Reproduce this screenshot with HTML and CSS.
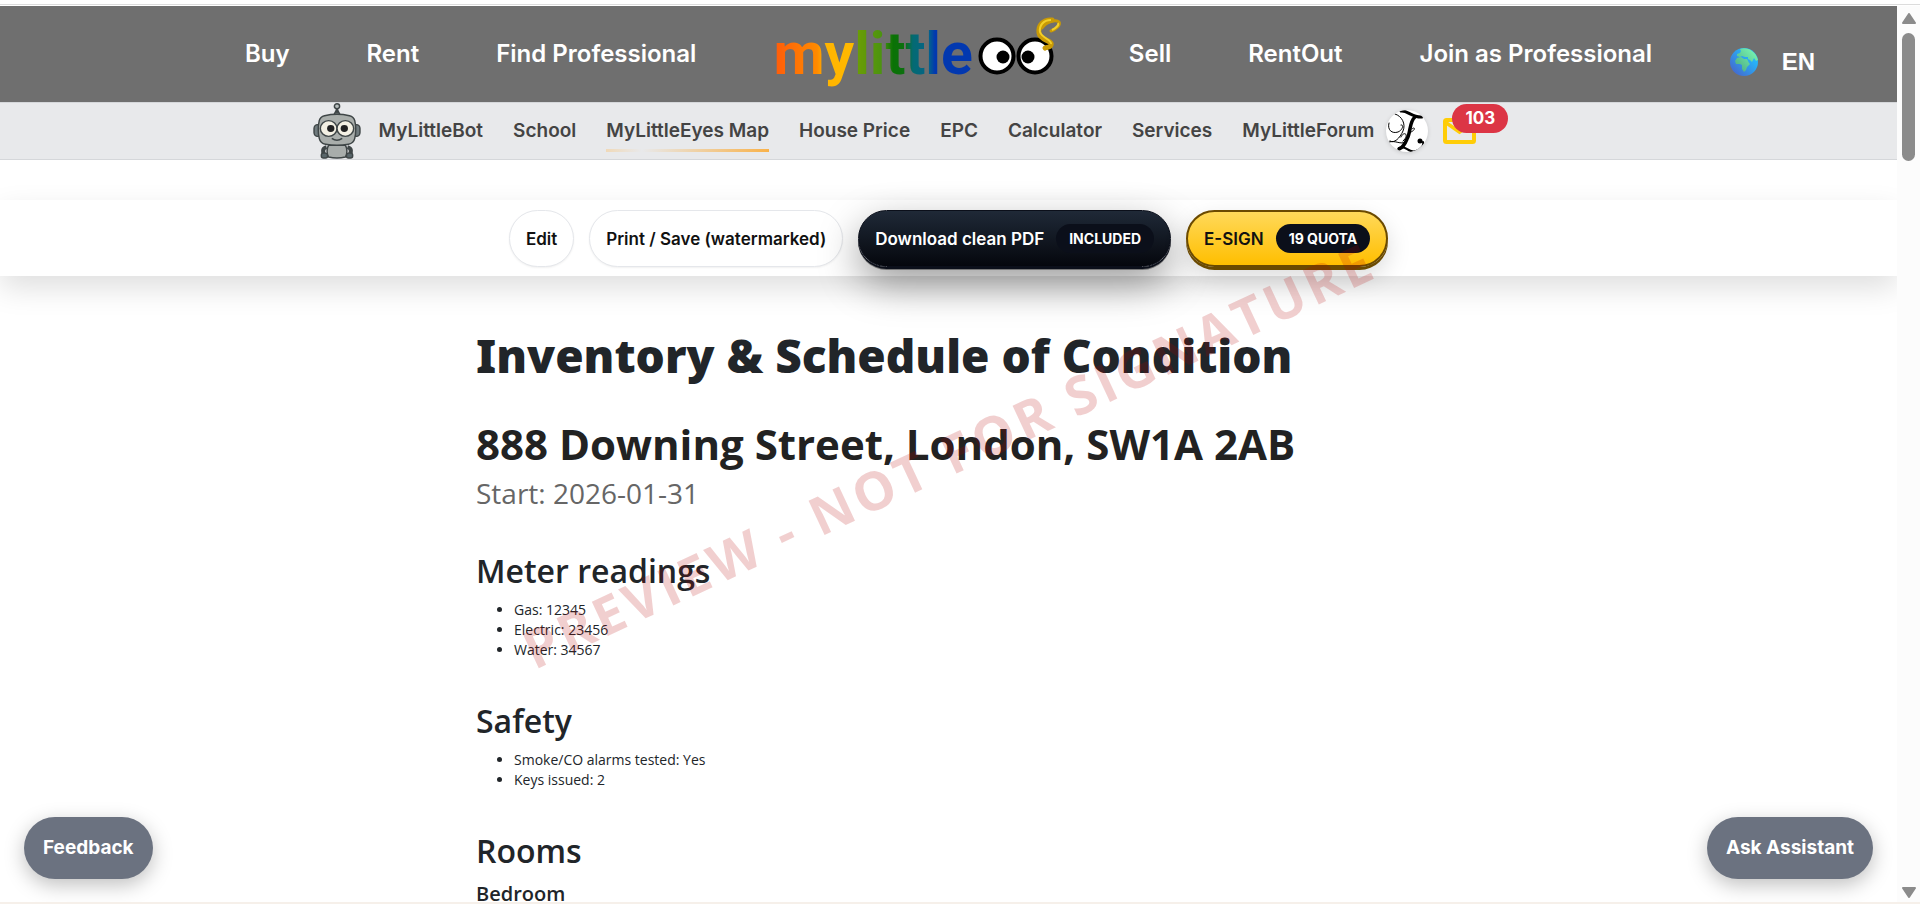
FILE: index.html
```html
<!DOCTYPE html>
<html lang="en">
<head>
<meta charset="utf-8">
<title>Inventory &amp; Schedule of Condition</title>
<link rel="stylesheet" href="styles.css">
</head>
<body>
<div class="frame">
  <div class="page">
    <header class="topbar">
      <nav class="main-nav">
        <a href="#">Buy</a>
        <a href="#">Rent</a>
        <a href="#">Find Professional</a>
        <a href="#" class="logo">
          <span class="logo-text">mylittle</span>
          <svg class="logo-eyes" width="76" height="60" viewBox="0 6 76 60">
            <g fill="#fff" stroke="#000" stroke-width="4">
              <circle cx="21" cy="38" r="16.5"/>
              <circle cx="59" cy="38" r="16.5"/>
            </g>
            <circle cx="27" cy="39" r="6.5"/>
            <circle cx="52" cy="39" r="6.5"/>
            <g fill="none" stroke="#c99a06" stroke-linecap="round">
              <path d="M76 2C68 1 62 7 63 15C64 23 77 22 75 27C74 30 70 29 69 30" stroke-width="5"/>
              <path d="M75 13C79 12 85 7 83 4C80 1 70 4 66 10" stroke-width="3"/>
            </g>
            <path d="M75 2C67 2 63 8 64 14C66 20 76 22 75 26M76 12C80 10 83 7 82 5" fill="none" stroke="#f3d028" stroke-width="2"/>
          </svg>
        </a>
        <a href="#">Sell</a>
        <a href="#">RentOut</a>
        <a href="#">Join as Professional</a>
      </nav>
      <button type="button" class="lang">
        <svg width="28" height="28" viewBox="0 0 28 28">
          <defs>
            <linearGradient id="sea" x1="1" y1="0" x2="0" y2="1"><stop offset=".3" stop-color="#27b2f8"/><stop offset="1" stop-color="#4a5bc6"/></linearGradient>
            <linearGradient id="land" x1="1" y1="0" x2="0" y2="1"><stop offset="0" stop-color="#7dffb8"/><stop offset="1" stop-color="#4aa57e"/></linearGradient>
          </defs>
          <circle cx="14" cy="14" r="14" fill="url(#sea)"/>
          <path fill="url(#land)" d="M10 1C13-.5 19 0 22 3C25 5 27 8 28 12L26 13L24 10L22 14L20 12L18 11L18 9L15 9L12 8L10 9L7 8L7 6L10 5L11 3ZM7 10L11 9L14 11L17 11L19 15L20 16L17 19L16 22L14 24L12 21L12 17L10 16L6 16L5 13Z"/>
        </svg>
        <span>EN</span>
      </button>
    </header>

    <nav class="sub-nav">
      <svg class="robot" width="48" height="56" viewBox="0 0 46 57" preserveAspectRatio="none">
        <g stroke="#3f4647" stroke-width="1.4">
          <path d="M20 12L22 8H24L26 12Z" fill="#6e7675"/>
          <path d="M23 4V10" stroke-width="2.5"/>
          <circle cx="23" cy="3.2" r="2.5" fill="#b8bfbe"/>
          <rect x="1" y="22" width="7" height="12" rx="4" fill="#707b7e"/>
          <rect x="38" y="22" width="7" height="12" rx="4" fill="#707b7e"/>
          <path d="M13 45C9 46 9 50 11 53M33 45C37 46 37 50 35 53" stroke-width="4" fill="none"/>
          <rect x="8" y="51" width="6" height="5" rx="2" fill="#59666a"/>
          <rect x="32" y="51" width="6" height="5" rx="2" fill="#59666a"/>
          <path d="M15 43H31C33 46 33 52 31 55Q23 57 15 55C13 52 13 46 15 43Z" fill="#a8adab"/>
          <path d="M11 13Q23 10 35 13Q39 14 40 18Q42 27 40 36Q39 41 34 42Q23 44 12 42Q7 41 6 36Q4 27 6 18Q7 14 11 13Z" fill="#a9aeab"/>
          <circle cx="15" cy="26" r="8" fill="#f4f1e4"/>
          <circle cx="31" cy="26" r="8" fill="#f4f1e4"/>
          <path d="M18 36Q23 40 28 36" fill="none"/>
        </g>
        <circle cx="17" cy="26" r="3.5" fill="#222"/>
        <circle cx="30" cy="26" r="3.5" fill="#222"/>
      </svg>
      <div class="links">
        <a href="#">MyLittleBot</a>
        <a href="#">School</a>
        <a href="#" class="active">MyLittleEyes Map</a>
        <a href="#">House Price</a>
        <a href="#">EPC</a>
        <a href="#">Calculator</a>
        <a href="#">Services</a>
        <a href="#">MyLittleForum</a>
      </div>
      <a href="#" class="avatar" aria-label="Profile">
        <svg width="42" height="42" viewBox="0 0 42 42">
          <g fill="none" stroke="#000" stroke-linecap="round">
            <path d="M15 1C21 0 27 8 36 7" stroke-width="3"/>
            <path d="M29 7C23 12 25 22 21 29C19 34 16 38 13 39" stroke-width="3.5"/>
            <path d="M13 38C20 34 22 44 30 41C35 39 38 36 37 32" stroke-width="2"/>
            <path d="M3 13C1 20 6 24 12 22C17 20 18 14 15 15M9 4C16 6 20 14 17 21C14 28 8 34 4 31M3 32C10 30 14 35 20 32M25 22C30 20 29 16 26 19M15 27C18 20 24 25 17 31" stroke-width="1"/>
          </g>
          <circle cx="34" cy="31" r="2.5"/>
        </svg>
      </a>
      <a href="#" class="mail" aria-label="Messages">
        <svg width="33" height="26" viewBox="0 0 33 26">
          <rect x="2" y="2" width="29" height="22" rx="1.5" fill="none" stroke="#ffcd07" stroke-width="4"/>
          <path d="M2 4L16.500 14L31 4" fill="none" stroke="#ffcd07" stroke-width="3.5"/>
        </svg>
        <span class="badge">103</span>
      </a>
    </nav>

    <div class="toolbar">
      <button type="button" class="btn">Edit</button>
      <button type="button" class="btn">Print / Save (watermarked)</button>
      <button type="button" class="btn btn-dark">Download clean PDF <span class="pill">INCLUDED</span></button>
      <button type="button" class="btn btn-gold">E-SIGN <span class="pill">19 QUOTA</span></button>
    </div>

    <main class="doc">
      <h1>Inventory &amp; Schedule of Condition</h1>
      <h2 class="address">888 Downing Street, London, SW1A 2AB</h2>
      <p class="start">Start: 2026-01-31</p>

      <h2>Meter readings</h2>
      <ul>
        <li>Gas: 12345</li>
        <li>Electric: 23456</li>
        <li>Water: 34567</li>
      </ul>

      <h2>Safety</h2>
      <ul>
        <li>Smoke/CO alarms tested: Yes</li>
        <li>Keys issued: 2</li>
      </ul>

      <h2>Rooms</h2>
      <h3>Bedroom</h3>
    </main>

    <div class="watermark"><span>PREVIEW - NOT FOR SIGNATURE</span></div>

    <button type="button" class="float feedback">Feedback</button>
    <button type="button" class="float assistant">Ask Assistant</button>
  </div>

  <div class="scrollbar">
    <svg width="14" height="11" viewBox="0 0 14 11"><path d="M7 1L13 10H1Z" fill="#8b8b8b" stroke="#8b8b8b" stroke-width="2" stroke-linejoin="round"/></svg>
    <div class="thumb"></div>
    <svg width="14" height="11" viewBox="0 0 14 11"><path d="M7 10L13 1H1Z" fill="#8b8b8b" stroke="#8b8b8b" stroke-width="2" stroke-linejoin="round"/></svg>
  </div>
</div>
</body>
</html>
```
FILE: styles.css
```css
* {
  box-sizing: border-box;
}

body {
  margin: 0;
  height: 100vh;
  display: flex;
  flex-direction: column;
  overflow: hidden;
  background: #fff;
  color: #212529;
  font-family: "Open Sans", "Noto Sans", sans-serif;
  border-bottom: 2px solid #f6f0ea;
}

body::before {
  content: "";
  flex: none;
  height: 6px;
  background: linear-gradient(#fff 4px, #dcdcdc 4px, #dcdcdc 5px, #fff 5px);
}

a {
  color: inherit;
  text-decoration: none;
}

button {
  font-family: inherit;
  cursor: pointer;
}

.frame {
  flex: 1;
  min-height: 0;
  display: flex;
}

.page {
  flex: 1;
  position: relative;
  overflow: hidden;
}

/* top bar */
.topbar {
  display: grid;
  grid-template-columns: 1fr auto 1fr;
  align-items: center;
  height: 96px;
  background: #6f6f6f;
  color: #fff;
  font: 600 24px/30px Inter, sans-serif;
}

.main-nav {
  grid-column: 2;
  display: flex;
  align-items: center;
  gap: 77px;
}

.logo {
  display: flex;
  align-items: center;
  gap: 3px;
  height: 76px;
}

.logo-text {
  font: 700 59px/76px Roboto, sans-serif;
  color: transparent;
  background: linear-gradient(90deg, #ff5a0a 0, #ff8a00 22%, #ffb400 26%, #ffb900 40%, #6b9d06 42%, #4a9310 55%, #0a7205 60%, #0c7010 66%, #046a72 70%, #04638a 78%, #0238b0 81%);
  -webkit-background-clip: text;
  background-clip: text;
}

.logo-eyes {
  overflow: visible;
}

.lang {
  display: flex;
  align-items: center;
  justify-self: end;
  gap: 24px;
  padding: 15px 0 0;
  margin-right: 82px;
  border: 0;
  background: none;
  color: #fff;
  font: 700 24px/30px "Liberation Sans", sans-serif;
}

/* second row of links */
.sub-nav {
  display: flex;
  align-items: center;
  justify-content: center;
  height: 58px;
  padding-right: 108px;
  background: #e8e9eb;
  border-top: 1px solid #d5d7da;
  border-bottom: 1px solid #d5d7da;
  color: #444;
  font: 600 19px/24px Inter, sans-serif;
}

.links {
  display: flex;
  gap: 30px;
  margin: 0 12px 0 18px;
}

.active {
  position: relative;
}

.active::after {
  content: "";
  position: absolute;
  left: 0;
  right: 0;
  bottom: -9px;
  height: 3px;
  background: linear-gradient(90deg, #f0d9b8, #e8e9eb 22%, #f9b24a);
}

.avatar {
  height: 42px;
  border-radius: 50%;
  background: #fff;
  overflow: hidden;
  box-shadow: 0 1px 4px rgba(0, 0, 0, .15);
}

.mail {
  position: relative;
  height: 26px;
  margin-left: 15px;
}

.badge {
  position: absolute;
  left: 9px;
  top: -14px;
  padding: 0 13px;
  border-radius: 15px;
  background: #dc3545;
  color: #fff;
  font-size: 17px;
  font-weight: 700;
  line-height: 29px;
}

/* document actions */
.toolbar {
  display: flex;
  justify-content: center;
  align-items: flex-start;
  gap: 15px;
  height: 76px;
  margin-top: 40px;
  padding-top: 10px;
  box-shadow: 0 12px 30px rgba(0, 0, 0, .13);
}

.btn {
  display: flex;
  align-items: center;
  gap: 12px;
  height: 57px;
  padding: 0 16px;
  border: 1px solid #e5e7eb;
  border-radius: 29px;
  background: #fff;
  color: #111;
  font: 600 17px/24px Inter, sans-serif;
  box-shadow: 0 1px 2px rgba(0, 0, 0, .06);
}

.pill {
  padding: 0 13px;
  border-radius: 15px;
  background: #0b0f1a;
  color: #fff;
  font-size: 14px;
  font-weight: 700;
  line-height: 29px;
}

.btn-dark {
  border-color: #0b0f1a;
  background: linear-gradient(#1f2937, #05070d);
  color: #fff;
  box-shadow: 0 2px 0 #0b0f1a, 0 3px 0 #777, 0 16px 40px rgba(0, 0, 0, .4);
}

.btn-gold {
  border: 2px solid #6b4a00;
  background: linear-gradient(#ffd95a, #ffbe00);
  box-shadow: 0 3px 0 #6b4a00, 0 10px 24px rgba(0, 0, 0, .15);
}

/* inventory */
.doc {
  max-width: 945px;
  margin: 0 auto;
  padding-top: 50px;
}

.doc h1 {
  margin: 0 0 33px;
  font: 900 46px/58px "Noto Sans", sans-serif;
}

.doc h2 {
  margin: 0 0 9px;
  font-size: 32px;
  font-weight: 600;
  line-height: 40px;
}

.doc .address {
  margin: 0;
  color: #222;
  font-size: 42px;
  font-weight: 700;
  line-height: 54px;
}

.doc .start {
  margin: 0 0 36px;
  color: #666;
  font-size: 28px;
  line-height: 44px;
}

.doc ul {
  margin: 0 0 41px;
  padding-left: 38px;
  font-size: 14px;
  line-height: 20px;
}

.doc h3 {
  margin: 0;
  font-size: 20px;
  font-weight: 600;
  line-height: 28px;
}

.watermark {
  position: absolute;
  inset: 0;
  display: flex;
  align-items: center;
  justify-content: center;
  pointer-events: none;
  color: rgba(180, 0, 0, .19);
  font-size: 53px;
  font-weight: 700;
  letter-spacing: 4px;
  white-space: nowrap;
}

.watermark span {
  transform: rotate(-25deg);
}

/* floating buttons */
.float {
  position: absolute;
  bottom: 23px;
  height: 62px;
  padding: 0 19px;
  border: 0;
  border-radius: 31px;
  background: #6b7280;
  color: #fff;
  font: 700 19px/24px Inter, sans-serif;
  box-shadow: 0 6px 20px rgba(0, 0, 0, .25);
}

.feedback {
  left: 24px;
}

.assistant {
  right: 24px;
}

.scrollbar {
  display: flex;
  flex-direction: column;
  align-items: center;
  width: 23px;
  padding: 7px 0 4px;
  background: #fcfcfc;
}

.thumb {
  width: 13px;
  height: 128px;
  margin: 9px 0 auto;
  border-radius: 7px;
  background: #8b8b8b;
}
```
